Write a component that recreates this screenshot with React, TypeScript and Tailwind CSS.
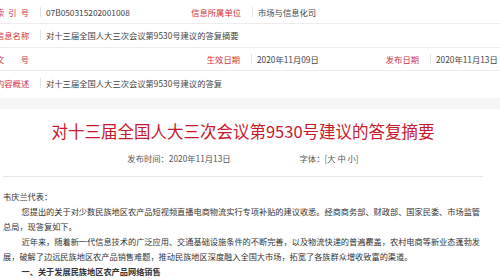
import React from 'react';

const FONT = { fontFamily: '"Noto Sans CJK SC", "Noto Sans", sans-serif' };

const Sep = () => <span className="ml-[11px] mr-[5px] h-[10px] w-px shrink-0 bg-[#e2e2e2]" />;

const Label = ({ children, className = '' }: { children: React.ReactNode; className?: string }) => (
  <span className={`shrink-0 text-[#d0303c] ${className}`}>{children}</span>
);

const Row = ({ children, last = false }: { children: React.ReactNode; last?: boolean }) => (
  <div className={`flex h-[23.5px] items-center whitespace-nowrap ${last ? '' : 'border-b border-[#ededed]'}`}>
    {children}
  </div>
);

export default function App() {
  return (
    <div className="h-[280px] w-[500px] overflow-hidden bg-white text-[8.3px] text-[#444]" style={FONT}>
      {/* info table, cut on the left in the shot */}
      <div className="ml-[-4px] pt-[0.5px]">
        <Row>
          <Label className="w-[33px] [text-align-last:justify]">索引号</Label>
          <Sep />
          <span className="w-[125px] shrink-0">07B050315202001008</span>
          <Label className="w-[70px] text-right">信息所属单位</Label>
          <Sep />
          <span>市场与信息化司</span>
        </Row>
        <Row>
          <Label className="w-[33px] [text-align-last:justify]">信息名称</Label>
          <Sep />
          <span>对十三届全国人大三次会议第9530号建议的答复摘要</span>
        </Row>
        <Row>
          <Label className="w-[33px] [text-align-last:justify]">文号</Label>
          <span className="ml-[16px] w-[125px] shrink-0" />
          <Label className="w-[70px] text-right">生效日期</Label>
          <Sep />
          <span className="w-[93px] shrink-0">2020年11月09日</span>
          <Label className="w-[69px] text-right">发布日期</Label>
          <Sep />
          <span>2020年11月13日</span>
        </Row>
        <Row last>
          <Label className="w-[33px] [text-align-last:justify]">内容概述</Label>
          <Sep />
          <span>对十三届全国人大三次会议第9530号建议的答复</span>
        </Row>
      </div>

      <div className="mt-[3.5px] h-[11px] bg-[#f5f5f5]" />

      <div className="ml-[3px] w-[480px]">
        <h1 className="mt-[10px] text-center text-[16.5px] leading-[24px] text-[#c9172b]">
          对十三届全国人大三次会议第9530号建议的答复摘要
        </h1>
        <div className="mt-[9px] flex justify-center gap-[69px] leading-[12px] text-[#555]">
          <span>发布时间：2020年11月13日</span>
          <span>字体：[大 中 小]</span>
        </div>
        <div className="mt-[12px] h-px bg-[#e6e6e6]" />

        <div className="mt-[11.5px] whitespace-nowrap text-[8.2px] leading-[15px] text-[#333]">
          <div>韦庆兰代表：</div>
          <div className="mt-[0.5px] pl-[18.5px]">
            您提出的关于对少数民族地区农产品短视频直播电商物流实行专项补贴的建议收悉。经商商务部、财政部、国家民委、市场监管
          </div>
          <div>总局，现答复如下。</div>
          <div className="pl-[18.5px]">
            近年来，随着新一代信息技术的广泛应用、交通基础设施条件的不断完善，以及物流快递的普遍覆盖，农村电商等新业态蓬勃发
          </div>
          <div>展，破解了边远民族地区农产品销售难题，推动民族地区深度融入全国大市场，拓宽了各族群众增收致富的渠道。</div>
          <div className="pl-[18.5px] font-bold">一、关于发展民族地区农产品网络销售</div>
        </div>
      </div>
    </div>
  );
}
